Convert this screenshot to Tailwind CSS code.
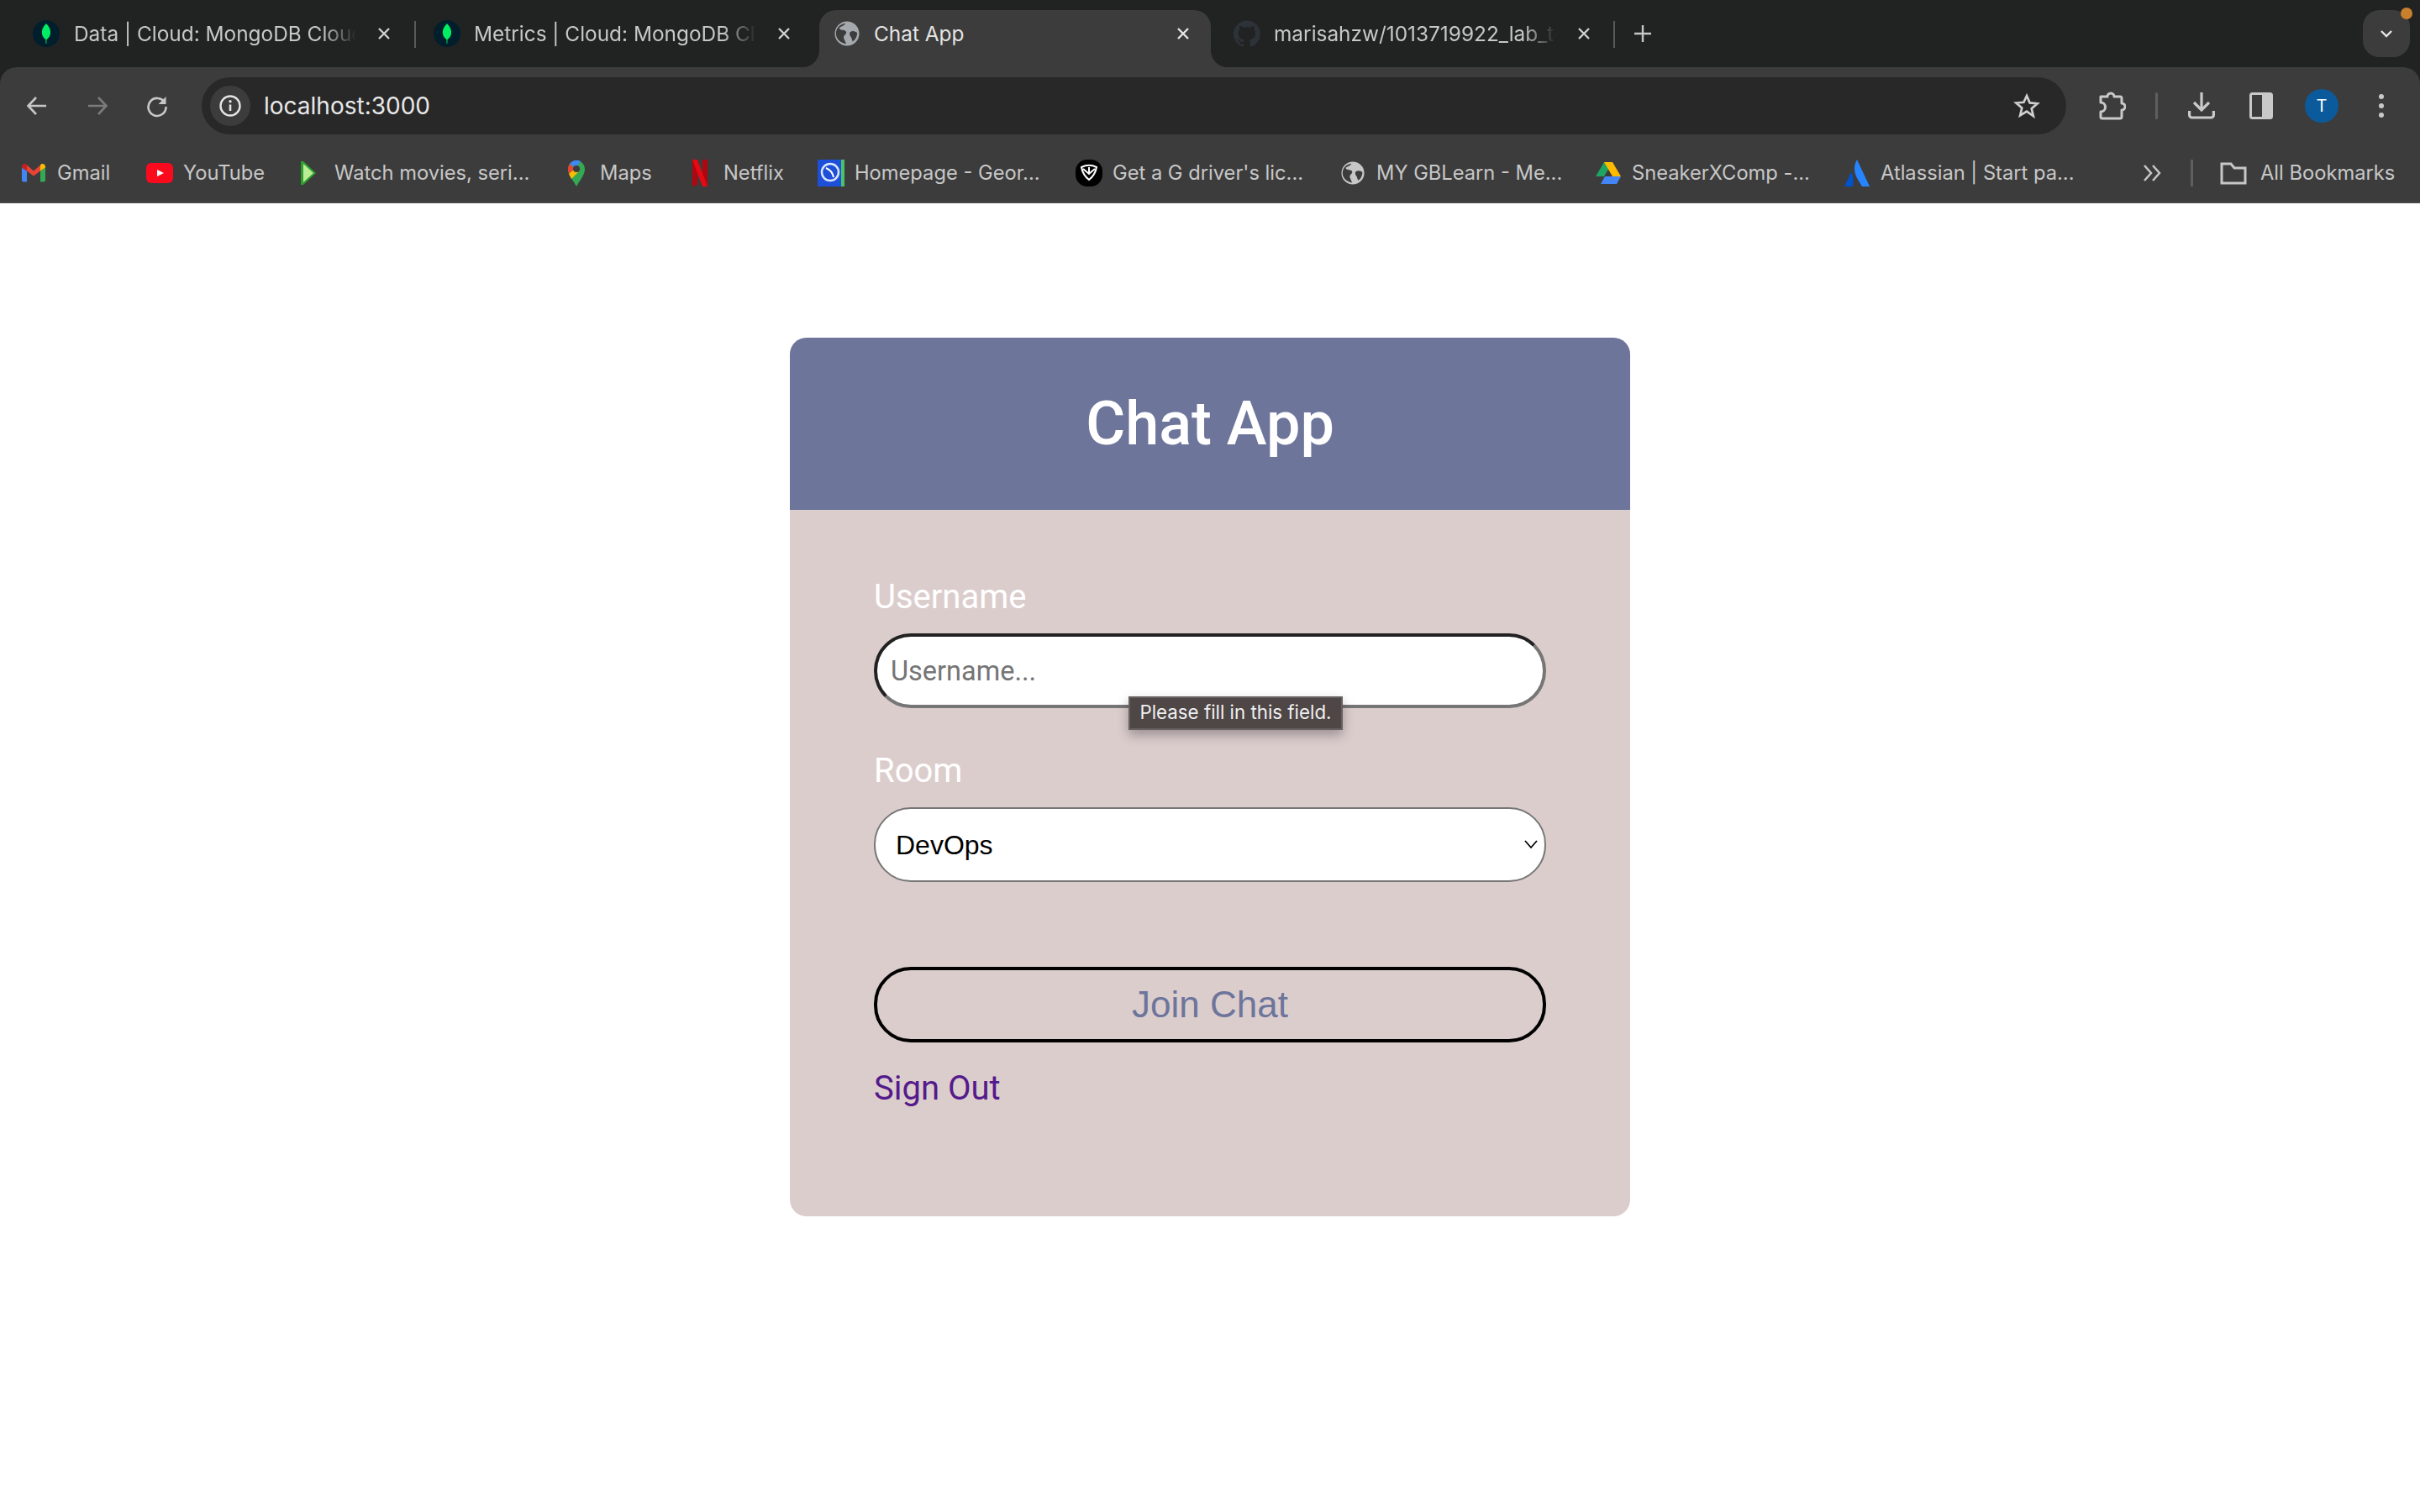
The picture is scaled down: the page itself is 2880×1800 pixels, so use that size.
<!DOCTYPE html>
<html lang="en">
<head>
  <meta charset="UTF-8" />
  <title>Chat App</title>
  <script src="https://cdn.jsdelivr.net/npm/@tailwindcss/browser@4"></script>
</head>
<body class="bg-white font-['Roboto',sans-serif]">
  <div class="bg-[#212322] w-[2880px]">
    <!-- tab strip -->
    <div class="h-20 flex items-start pl-[23px] pt-3 text-[24.400px] font-['Inter',sans-serif] text-[#c7c7c7]">
      <div class="w-[466px] h-[68px] flex items-start pt-[12px] pl-[16px]">
        <svg class="w-8 h-8 shrink-0" viewBox="0 0 32 32"><circle cx="16" cy="16" r="16" fill="#001e2b"/><path d="M16 4c4 4 5.500 8 5 12-.4 3.500-3 6-4.500 7l-.2 5h-.7l-.2-5c-1.500-1-4.100-3.500-4.500-7-.5-4 1-8 5.100-12z" fill="#00ed64"/></svg>
        <span class="ml-[17px] w-[336px] whitespace-nowrap overflow-hidden leading-8 [mask-image:linear-gradient(to_right,black_88%,transparent)]">Data | Cloud: MongoDB Cloud</span>
        <svg class="w-4 h-4 mt-2 ml-[25px]" viewBox="0 0 16 16"><path d="M2 2l12 12M14 2L2 14" stroke="#d0d0d0" stroke-width="2.400"/></svg>
      </div>
      <div class="w-[10px] flex justify-center pt-[13px]"><div class="w-[2px] h-8 bg-[#5a5a5a]"></div></div>
      <div class="w-[466px] h-[68px] flex items-start pt-[12px] pl-[17px]">
        <svg class="w-8 h-8 shrink-0" viewBox="0 0 32 32"><circle cx="16" cy="16" r="16" fill="#001e2b"/><path d="M16 4c4 4 5.500 8 5 12-.4 3.500-3 6-4.500 7l-.2 5h-.7l-.2-5c-1.500-1-4.100-3.500-4.500-7-.5-4 1-8 5.100-12z" fill="#00ed64"/></svg>
        <span class="ml-[16px] w-[336px] whitespace-nowrap overflow-hidden leading-8 [mask-image:linear-gradient(to_right,black_88%,transparent)]">Metrics | Cloud: MongoDB Cloud</span>
        <svg class="w-4 h-4 mt-2 ml-[25px]" viewBox="0 0 16 16"><path d="M2 2l12 12M14 2L2 14" stroke="#d0d0d0" stroke-width="2.400"/></svg>
      </div>
      <div class="w-[10px]"></div>
      <!-- active tab -->
      <div class="relative w-[466px] h-[68px] bg-[#3c3c3c] rounded-t-[20px] flex items-start pt-[12px] pl-[18px] text-[#e3e3e3]">
        <svg class="absolute -left-5 bottom-0 w-5 h-5" viewBox="0 0 20 20"><path d="M20 0V20H0A20 20 0 0 0 20 0Z" fill="#3c3c3c"/></svg>
        <svg class="absolute -right-5 bottom-0 w-5 h-5" viewBox="0 0 20 20"><path d="M0 0V20H20A20 20 0 0 1 0 0Z" fill="#3c3c3c"/></svg>
        <svg class="w-[30px] h-8 shrink-0" viewBox="0 0 32 32"><circle cx="16" cy="16" r="15.500" fill="#a5a9ae"/><path d="M14 3c-1 3-6 4-8 6 2 4 8 1 9 5 1 3-4 4-3 8l3 7c-7-1-13-6-13-13C2 9 7 4 14 3zM20 14c3-2 7-1 9 1 0 4-2 9-6 11-1-3-1-5-3-7-1-2-1-4 0-5z" fill="#3c3c3c"/></svg>
        <span class="ml-[17px] w-[336px] whitespace-nowrap overflow-hidden leading-8">Chat App</span>
        <svg class="w-4 h-4 mt-2 ml-[24px]" viewBox="0 0 16 16"><path d="M2 2l12 12M14 2L2 14" stroke="#e6e6e6" stroke-width="2.400"/></svg>
      </div>
      <div class="w-[10px]"></div>
      <div class="w-[466px] h-[68px] flex items-start pt-[12px] pl-[17px]">
        <svg class="w-8 h-8 shrink-0" viewBox="0 0 24 24"><path fill="#2c3238" d="M12 .3a12 12 0 0 0-3.800 23.400c.6.100.8-.3.800-.6v-2c-3.300.7-4-1.600-4-1.600-.6-1.400-1.400-1.800-1.400-1.800-1.100-.7.100-.7.100-.7 1.200.1 1.800 1.200 1.800 1.200 1.100 1.800 2.800 1.300 3.500 1 .1-.8.400-1.300.8-1.600-2.700-.3-5.500-1.300-5.500-5.900 0-1.300.5-2.400 1.200-3.200-.1-.3-.5-1.500.1-3.200 0 0 1-.3 3.300 1.200a11.500 11.500 0 0 1 6 0c2.300-1.500 3.300-1.200 3.300-1.200.6 1.700.2 2.900.1 3.200.8.800 1.200 1.900 1.200 3.200 0 4.600-2.800 5.600-5.500 5.900.4.400.8 1.100.8 2.200v3.300c0 .3.200.7.800.6A12 12 0 0 0 12 .3z"/></svg>
        <span class="ml-[16px] w-[336px] whitespace-nowrap overflow-hidden leading-8 [mask-image:linear-gradient(to_right,black_88%,transparent)]">marisahzw/1013719922_lab_test2</span>
        <svg class="w-4 h-4 mt-2 ml-[25px]" viewBox="0 0 16 16"><path d="M2 2l12 12M14 2L2 14" stroke="#d0d0d0" stroke-width="2.400"/></svg>
      </div>
      <div class="w-[2px] h-8 mt-[13px] ml-[3px] bg-[#5a5a5a]"></div>
      <svg class="w-6 h-6 mt-[16px] ml-[21px]" viewBox="0 0 24 24"><path d="M12 2v20M2 12h20" stroke="#c7c7c7" stroke-width="2.400"/></svg>
      <div class="relative w-14 h-14 ml-auto mr-3 rounded-[20px] bg-[#3c3c3c] flex items-center justify-center">
        <svg class="w-4 h-4" viewBox="0 0 16 16"><path d="M2 5l6 6 6-6" fill="none" stroke="#e6e6e6" stroke-width="2.400"/></svg>
        <div class="absolute -top-[3px] -right-[3px] w-[14px] h-[14px] rounded-full bg-[#c9802c]"></div>
      </div>
    </div>
    <!-- toolbar -->
    <div class="bg-[#3c3c3c] rounded-t-[20px] border-b-2 border-[#474747]">
      <div class="h-20 flex items-start pt-3">
        <div class="w-[240px] h-[68px] flex items-center text-[#c7c7c7]">
          <svg class="w-7 h-7 ml-[30px]" viewBox="0 0 28 28"><path d="M25 14H4M13 4L3.500 14 13 24" fill="none" stroke="#c7c7c7" stroke-width="2.600"/></svg>
          <svg class="w-7 h-7 ml-[44px]" viewBox="0 0 28 28"><path d="M3 14h21M15 4l9.500 10L15 24" fill="none" stroke="#7b7b7b" stroke-width="2.600"/></svg>
          <svg class="w-7 h-7 ml-[43px]" viewBox="0 0 28 28"><path d="M23 10A10.500 10.500 0 1 0 24.500 15" fill="none" stroke="#c7c7c7" stroke-width="2.600"/><path d="M24.500 3v9h-9z" fill="#c7c7c7"/></svg>
        </div>
        <div class="w-[2219px] h-[68px] rounded-full bg-[#282828] flex items-center pl-[10px] pr-[31px]">
          <div class="w-12 h-12 rounded-full bg-[#3c3c3c] flex items-center justify-center">
            <svg class="w-7 h-7" viewBox="0 0 28 28"><circle cx="14" cy="14" r="11.500" fill="none" stroke="#e3e3e3" stroke-width="2.400"/><path d="M14 12.500V20" stroke="#e3e3e3" stroke-width="2.600"/><circle cx="14" cy="8.800" r="1.700" fill="#e3e3e3"/></svg>
          </div>
          <span class="ml-[16px] text-[28px] font-['Inter',sans-serif] text-[#e8e8e8]">localhost:3000</span>
          <svg class="w-8 h-8 ml-auto" viewBox="0 0 24 24"><path d="M12 3l2.700 6.300 6.800.6-5.200 4.500 1.600 6.700L12 17l-5.900 3.600 1.600-6.700-5.200-4.500 6.800-.6z" fill="none" stroke="#d0d0d0" stroke-width="2"/></svg>
        </div>
        <div class="flex-1 h-[68px] flex items-center">
          <svg class="w-[34px] h-9 ml-[37px]" viewBox="0 0 34 36"><path d="M4 7H12a4 4 0 0 1 8 0H27a2 2 0 0 1 2 2V15a4 4 0 0 1 0 8V31a2 2 0 0 1-2 2H6a2 2 0 0 1-2-2V25a5.500 5.500 0 0 0 0-11z" fill="none" stroke="#c9c9c9" stroke-width="3" stroke-linejoin="round"/></svg>
          <div class="w-[3px] h-8 ml-[35px] rounded-full bg-[#5f5f5f]"></div>
          <svg class="w-8 h-8 ml-[36px]" viewBox="0 0 32 32"><path d="M16 0v21M7 12l9 9 9-9" fill="none" stroke="#c9c9c9" stroke-width="3.200"/><path d="M1.600 22v5a3 3 0 0 0 3 3h22.800a3 3 0 0 0 3-3v-5" fill="none" stroke="#c9c9c9" stroke-width="3.200"/></svg>
          <svg class="w-7 h-8 ml-[41px]" viewBox="0 0 28 32"><rect x="1.500" y="1.500" width="25" height="29" rx="2" fill="none" stroke="#c9c9c9" stroke-width="3"/><rect x="15" y="1.500" width="11.500" height="29" fill="#c9c9c9"/></svg>
          <div class="w-10 h-10 ml-[38px] rounded-full bg-[#0b5a9c] flex items-center justify-center text-[20px] text-white">T</div>
          <svg class="w-2 h-8 ml-[47px]" viewBox="0 0 8 32"><circle cx="4" cy="5" r="3" fill="#c9c9c9"/><circle cx="4" cy="16" r="3" fill="#c9c9c9"/><circle cx="4" cy="27" r="3" fill="#c9c9c9"/></svg>
        </div>
      </div>
      <!-- bookmarks bar -->
      <div class="h-20 flex items-center pl-6 pt-[12px] text-[23.700px] font-['Inter',sans-serif] text-[#c7c7c7] whitespace-nowrap">
        <div class="w-[150px] flex items-center gap-3">
          <svg class="w-8 h-[25px] px-[2px]" viewBox="0 0 28 22"><path d="M0 5V20a2 2 0 0 0 2 2H6V9z" fill="#4285f4"/><path d="M22 9V22H26a2 2 0 0 0 2-2V5z" fill="#34a853"/><path d="M6 9V2L14 9 22 2V9L14 15z" fill="#ea4335"/><path d="M0 5V4C0 1 4-1 6 2V9z" fill="#c5221f"/><path d="M22 2C24-1 28 1 28 4V5L22 9z" fill="#fbbc04"/></svg>
          <span>Gmail</span>
        </div>
        <div class="w-[177px] flex items-center gap-3">
          <svg class="w-8 h-6" viewBox="0 0 32 24"><rect width="32" height="24" rx="6" fill="#fb0a1e"/><path d="M13 8l8 4-8 4z" fill="#fff"/></svg>
          <span>YouTube</span>
        </div>
        <div class="w-[319px] flex items-center gap-[15px]">
          <svg class="w-8 h-7" viewBox="0 0 32 28"><path d="M7 0h3l15 14-15 14H7z" fill="#2e9e2e"/><path d="M10 3l12 11-12 11z" fill="#b9ee95"/></svg>
          <span>Watch movies, seri...</span>
        </div>
        <div class="w-[147px] flex items-center gap-3">
          <svg class="w-8 h-8" viewBox="0 0 32 32"><path d="M16 32C12 24 6 19 6 11a10 10 0 0 1 20 0c0 8-6 13-10 21z" fill="#34a853"/><path d="M8 5a10 10 0 0 1 13-3l-6 8z" fill="#4285f4"/><path d="M6 11c0-2 1-4 2-6l6 6-7 6z" fill="#ea4335"/><path d="M7 17l7-6 4 4-8 8z" fill="#fbbc04"/><circle cx="16" cy="11" r="4" fill="#3c3c3c"/></svg>
          <span>Maps</span>
        </div>
        <div class="w-[156px] flex items-center gap-3">
          <svg class="w-8 h-8" viewBox="0 0 32 32"><path d="M7 0h6v30l-6 2z" fill="#b1060f"/><path d="M19 0h6v32l-6-2z" fill="#b1060f"/><path d="M7 0h6l12 32h-6z" fill="#e50914"/></svg>
          <span>Netflix</span>
        </div>
        <div class="w-[307px] flex items-center gap-3">
          <svg class="w-8 h-8" viewBox="0 0 32 32"><rect width="32" height="32" fill="#1d4fd8"/><rect x="28" width="4" height="32" fill="#49c26b"/><circle cx="15" cy="15" r="10" fill="none" stroke="#dbe6ff" stroke-width="2.500"/><path d="M10 10c5 2 8 6 9 11" fill="none" stroke="#fff" stroke-width="2"/></svg>
          <span>Homepage - Geor...</span>
        </div>
        <div class="w-[314px] flex items-center gap-3">
          <svg class="w-8 h-8" viewBox="0 0 32 32"><rect width="32" height="32" rx="14" fill="#000"/><path d="M7 9c6-3 12-3 18 0-1 6-4 11-9 15-5-4-8-9-9-15zM16 9v8M9 11l7 6 7-6" fill="none" stroke="#fff" stroke-width="2"/></svg>
          <span>Get a G driver's lic...</span>
        </div>
        <div class="w-[304px] flex items-center gap-3">
          <svg class="w-7 h-8 mx-[2px]" viewBox="0 0 32 32"><circle cx="16" cy="16" r="15.500" fill="#c7c7c7"/><path d="M14 3c-1 3-6 4-8 6 2 4 8 1 9 5 1 3-4 4-3 8l3 7c-7-1-13-6-13-13C2 9 7 4 14 3zM20 14c3-2 7-1 9 1 0 4-2 9-6 11-1-3-1-5-3-7-1-2-1-4 0-5z" fill="#3c3c3c"/></svg>
          <span>MY GBLearn - Me...</span>
        </div>
        <div class="w-[296px] flex items-center gap-3">
          <svg class="w-8 h-8" viewBox="0 0 32 32"><path d="M11 3h10L11 20H1z" fill="#1fa463"/><path d="M21 3l10 17H21L11 3z" fill="#ffba00"/><path d="M7 29l5-9h19l-5 9z" fill="#4285f4"/></svg>
          <span>SneakerXComp -...</span>
        </div>
        <div class="w-[355px] flex items-center gap-3">
          <svg class="w-8 h-8" viewBox="0 0 32 32"><path d="M16 0c-4 7-4 14 0 22l6 10h9z" fill="#2684ff"/><path d="M9 15L1 32h10c1-6 1-12-2-17z" fill="#0052cc"/></svg>
          <span>Atlassian | Start pa...</span>
        </div>
        <svg class="w-6 h-6" viewBox="0 0 24 24"><path d="M3 3l8 9-8 9M13 3l8 9-8 9" fill="none" stroke="#c7c7c7" stroke-width="2.500"/></svg>
        <div class="w-[3px] h-8 ml-[34px] bg-[#5f5f5f]"></div>
        <svg class="w-8 h-7 ml-[32px]" viewBox="0 0 32 28"><path d="M2 3h11l4 5h13v18H2z" fill="none" stroke="#c7c7c7" stroke-width="3"/></svg>
        <span class="ml-[16px]">All Bookmarks</span>
      </div>
    </div>
  </div>

  <main class="flex justify-center pt-40">
    <div class="w-[1000px] h-[1046px] rounded-[20px] overflow-hidden bg-[#dccdcd]">
      <header class="h-[205px] bg-[#6d759b] flex items-center justify-center">
        <h1 class="text-[72px] font-medium text-white">Chat App</h1>
      </header>
      <form class="px-[100px] pt-[80px]">
        <label class="block text-[40px] leading-[48px] text-white mb-[19px]">Username</label>
        <div class="relative">
          <input placeholder="Username..." class="w-full h-[89px] rounded-[44px] bg-white pl-[16px] text-[32.500px] placeholder:text-[#757575] border-4 border-t-[#222222] border-l-[#222222] border-r-[#767676] border-b-[#767676]" />
          <div class="absolute left-[303px] top-[75px] w-[255px] h-10 bg-[#4f4646] border-2 border-[#666060] shadow-[0_6px_14px_rgba(0,0,0,0.3)] flex items-center justify-center font-['Inter',sans-serif] text-[22.300px] text-[#f0f0f0] pb-[2px]">Please fill in this field.</div>
        </div>
        <label class="block mt-[51px] text-[40px] leading-[48px] text-white mb-[19px]">Room</label>
        <div class="relative">
          <select class="appearance-none w-full h-[89px] rounded-[44px] bg-white pl-[24px] text-[32px] text-black font-['Liberation_Sans',sans-serif] border-2 border-[#767676]">
            <option>DevOps</option>
          </select>
          <svg class="absolute right-[10px] top-[36px] w-4 h-4" viewBox="0 0 16 16"><path d="M1 4l7 8 7-8" fill="none" stroke="#000" stroke-width="1.800"/></svg>
        </div>
        <button type="button" class="block w-full h-[90px] mt-[101px] rounded-[44px] border-4 border-black text-[44px] text-[#6d759b] font-['Liberation_Sans',sans-serif]">Join Chat</button>
        <a class="inline-block mt-[31px] text-[40px] leading-[48px] text-[#551a8b]">Sign Out</a>
      </form>
    </div>
  </main>
</body>
</html>
